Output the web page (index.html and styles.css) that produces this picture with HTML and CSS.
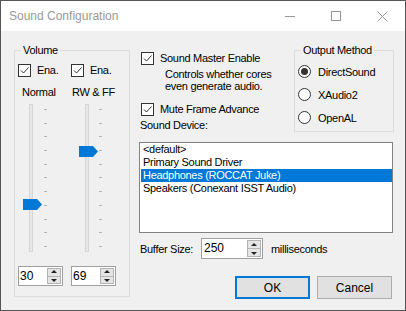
FILE: index.html
```html
<!DOCTYPE html>
<html lang="en">
<head>
  <meta charset="UTF-8" />
  <title>Sound Configuration</title>
  <link rel="stylesheet" href="styles.css">
</head>
<body>
  <div class="window">
    <div class="titlebar">
      <span class="title">Sound Configuration</span>
      <div class="caption">
        <span class="cap"><svg width="10" height="10" viewBox="0 0 10 10"><path d="M0 5.5H10" stroke="#999" /></svg></span>
        <span class="cap"><svg width="10" height="10" viewBox="0 0 10 10"><rect x="0.5" y="0.5" width="9" height="9" fill="none" stroke="#999" /></svg></span>
        <span class="cap"><svg width="11" height="11" viewBox="0 0 11 11"><path d="M0.5 0.5L10.5 10.5M10.5 0.5L0.5 10.5" stroke="#999" /></svg></span>
      </div>
    </div>

    <div class="content">
      <fieldset class="group volume">
        <legend>Volume</legend>
        <div class="vol-cols">
          <div class="vol-col">
            <div class="check">
              <span class="box"><svg width="11" height="11" viewBox="0 0 11 11"><path d="M2 5.5L4.5 8L9.5 2.5" fill="none" stroke="#333" /></svg></span>Ena.
            </div>
            <div class="vol-label">Normal</div>
            <div class="slider">
              <div class="track"></div>
              <div class="ticks"><i></i><i></i><i></i><i></i><i></i><i></i><i></i><i></i><i></i><i></i><i></i></div>
              <div class="thumb" style="top: 95px"><svg width="19" height="11" viewBox="0 0 19 11"><path d="M0 0H14L19 5.5L14 11H0Z" fill="#0078d7" /></svg></div>
            </div>
            <div class="spin">
              <span class="spin-val">30</span>
              <span class="spin-btns"><i class="up"></i><i class="down"></i></span>
            </div>
          </div>
          <div class="vol-col vol-col-2">
            <div class="check">
              <span class="box"><svg width="11" height="11" viewBox="0 0 11 11"><path d="M2 5.5L4.5 8L9.5 2.5" fill="none" stroke="#333" /></svg></span>Ena.
            </div>
            <div class="vol-label">RW &amp; FF</div>
            <div class="slider">
              <div class="track"></div>
              <div class="ticks"><i></i><i></i><i></i><i></i><i></i><i></i><i></i><i></i><i></i><i></i><i></i></div>
              <div class="thumb" style="top: 42px"><svg width="19" height="11" viewBox="0 0 19 11"><path d="M0 0H14L19 5.5L14 11H0Z" fill="#0078d7" /></svg></div>
            </div>
            <div class="spin">
              <span class="spin-val">69</span>
              <span class="spin-btns"><i class="up"></i><i class="down"></i></span>
            </div>
          </div>
        </div>
      </fieldset>

      <div class="right">
        <div class="top-row">
          <div class="opts">
            <div class="check">
              <span class="box"><svg width="11" height="11" viewBox="0 0 11 11"><path d="M2 5.5L4.5 8L9.5 2.5" fill="none" stroke="#333" /></svg></span>Sound Master Enable
            </div>
            <div class="desc">Controls whether cores<br>even generate audio.</div>
            <div class="check mute">
              <span class="box"><svg width="11" height="11" viewBox="0 0 11 11"><path d="M2 5.5L4.5 8L9.5 2.5" fill="none" stroke="#333" /></svg></span>Mute Frame Advance
            </div>
            <div class="device-label">Sound Device:</div>
          </div>

          <fieldset class="group output">
            <legend>Output Method</legend>
            <div class="radios">
              <div class="radio"><svg width="13" height="13" viewBox="0 0 13 13"><circle cx="6.5" cy="6.5" r="6" fill="#fff" stroke="#333" /><circle cx="6.5" cy="6.5" r="3.5" fill="#333" /></svg>DirectSound</div>
              <div class="radio"><svg width="13" height="13" viewBox="0 0 13 13"><circle cx="6.5" cy="6.5" r="6" fill="#fff" stroke="#333" /></svg>XAudio2</div>
              <div class="radio"><svg width="13" height="13" viewBox="0 0 13 13"><circle cx="6.5" cy="6.5" r="6" fill="#fff" stroke="#333" /></svg>OpenAL</div>
            </div>
          </fieldset>
        </div>

        <div class="listbox">
          <div class="item">&lt;default&gt;</div>
          <div class="item">Primary Sound Driver</div>
          <div class="item selected">Headphones (ROCCAT Juke)</div>
          <div class="item">Speakers (Conexant ISST Audio)</div>
        </div>

        <div class="buffer-row">
          <span class="buffer-label">Buffer Size:</span>
          <div class="spin spin-wide">
            <span class="spin-val">250</span>
            <span class="spin-btns"><i class="up"></i><i class="down"></i></span>
          </div>
          <span class="unit">milliseconds</span>
        </div>

        <div class="buttons">
          <button class="btn btn-default">OK</button>
          <button class="btn">Cancel</button>
        </div>
      </div>
    </div>
  </div>
</body>
</html>
```

FILE: styles.css
```css
body {
  margin: 0;
  font-family: "Liberation Sans", Arial, sans-serif;
  font-size: 11px;
  letter-spacing: -0.3px;
  color: #000;
}

.window {
  width: 406px;
  height: 311px;
  box-sizing: border-box;
  border: 1px solid #555;
  background-color: #f0f0f0;
  display: flex;
  flex-direction: column;
}

.titlebar {
  height: 30px;
  flex: none;
  background-color: #fff;
  display: flex;
  align-items: center;
  justify-content: space-between;
}

.title {
  padding-left: 8px;
  font-size: 12px;
  letter-spacing: 0;
  color: #999;
  margin-top: -1px;
}

.caption {
  display: flex;
  height: 100%;
}

.cap {
  width: 46px;
  display: flex;
  align-items: center;
  justify-content: center;
}

.cap svg {
  display: block;
}

.content {
  display: flex;
  padding: 13px 0 0 13px;
}

/* group boxes */
.group {
  margin: 0;
  padding: 0;
  min-width: 0;
  box-sizing: border-box;
  border: 1px solid #dcdcdc;
}

.group legend {
  padding: 0 2px;
  margin-left: 6px;
  line-height: 13px;
}

.volume {
  width: 116px;
  height: 253px;
}

.vol-cols {
  display: flex;
  padding: 7px 0 0 3px;
}

.vol-col {
  width: 53px;
  display: flex;
  flex-direction: column;
}

.check {
  display: flex;
  align-items: center;
  height: 13px;
  line-height: 13px;
  white-space: nowrap;
}

.box {
  width: 13px;
  height: 13px;
  box-sizing: border-box;
  border: 1px solid #333;
  background-color: #fff;
  margin-right: 6px;
  flex: none;
}

.box svg {
  display: block;
}

.vol-label {
  margin-top: 9px;
  line-height: 13px;
  padding-left: 4px;
  white-space: nowrap;
}

.vol-col-2 .vol-label {
  padding-left: 1px;
}

/* trackbars */
.slider {
  position: relative;
  display: flex;
  height: 148px;
  margin-top: 5px;
  padding-left: 11px;
}

.vol-col-2 .slider {
  padding-left: 14px;
}

.track {
  width: 4px;
  height: 148px;
  box-sizing: border-box;
  border: 1px solid #d6d6d6;
  background-color: #e7e7e7;
}

.ticks {
  margin-left: 11px;
  padding: 5px 0;
  box-sizing: border-box;
  height: 148px;
  display: flex;
  flex-direction: column;
  justify-content: space-between;
}

.vol-col-2 .ticks {
  margin-left: 10px;
}

.ticks i {
  display: block;
  width: 3px;
  height: 1px;
  background-color: #b4b4b4;
}

.thumb {
  position: absolute;
  left: 5px;
  width: 19px;
  height: 11px;
}

.vol-col-2 .thumb {
  left: 8px;
}

.thumb svg {
  display: block;
}

/* numeric up-down */
.spin {
  margin-top: 14px;
  width: 45px;
  height: 20px;
  box-sizing: border-box;
  border: 1px solid #a0a0a0;
  background-color: #fff;
  display: flex;
}

.spin-val {
  flex: 1;
  font-size: 12px;
  letter-spacing: 0;
  line-height: 18px;
  padding-left: 1px;
}

.spin-btns {
  width: 14px;
  padding: 1px 1px 1px 0;
  display: flex;
  flex-direction: column;
}

.spin-btns i {
  flex: 1;
  position: relative;
  background-color: #e5e5e5;
  border: 1px solid #b4b4b4;
}

.spin-btns i + i {
  border-top: none;
}

.spin-btns i::after {
  content: "";
  position: absolute;
  left: 50%;
  top: 50%;
  margin-left: -3px;
  border-left: 3px solid transparent;
  border-right: 3px solid transparent;
}

.spin-btns .up::after {
  margin-top: -2px;
  border-bottom: 3px solid #222;
}

.spin-btns .down::after {
  margin-top: -1px;
  border-top: 3px solid #222;
}

/* right column */
.right {
  margin-left: 9px;
  width: 255px;
  display: flex;
  flex-direction: column;
}

.top-row {
  display: flex;
  justify-content: space-between;
}

.opts {
  padding: 8px 0 0 2px;
}

.desc {
  margin: 3px 0 0 24px;
  line-height: 12px;
}

.mute {
  margin-top: 11px;
}

.device-label {
  margin: 3px 0 0 -1px;
  line-height: 13px;
}

.output {
  width: 100px;
  height: 88px;
}

.radios {
  padding: 8px 0 0 3px;
  display: flex;
  flex-direction: column;
  gap: 10px;
}

.radio {
  display: flex;
  align-items: center;
  height: 13px;
  white-space: nowrap;
}

.radio svg {
  display: block;
  margin-right: 7px;
}

.listbox {
  margin-top: 10px;
  width: 254px;
  height: 91px;
  box-sizing: border-box;
  border: 1px solid #828282;
  background-color: #fff;
  padding: 0 0 0 1px;
}

.item {
  height: 13px;
  line-height: 13px;
  padding-left: 2px;
  white-space: nowrap;
}

.item.selected {
  background-color: #0078d7;
  color: #fff;
}

.buffer-row {
  margin-top: 5px;
  display: flex;
  align-items: center;
}

.buffer-label {
  width: 62px;
  padding-left: 1px;
  box-sizing: border-box;
}

.spin-wide {
  margin-top: 0;
  width: 62px;
  height: 21px;
}

.spin-wide .spin-val {
  padding-left: 2px;
  line-height: 19px;
}

.unit {
  margin-left: 8px;
}

.buttons {
  margin-top: 17px;
  padding-right: 2px;
  display: flex;
  justify-content: flex-end;
  gap: 7px;
}

.btn {
  width: 75px;
  height: 23px;
  margin: 0;
  padding: 0;
  font-family: inherit;
  font-size: 12px;
  letter-spacing: 0;
  color: #000;
  background-color: #e1e1e1;
  border: 1px solid #adadad;
}

.btn-default {
  border: 2px solid #0078d7;
}
```
